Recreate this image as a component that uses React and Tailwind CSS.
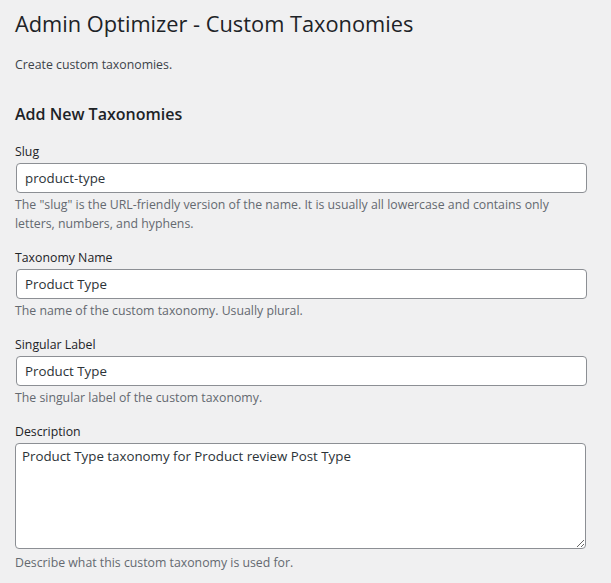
import React from "react";

const fields = [
  {
    label: "Slug",
    value: "product-type",
    help: "The \"slug\" is the URL-friendly version of the name. It is usually all lowercase and contains only letters, numbers, and hyphens.",
  },
  {
    label: "Taxonomy Name",
    value: "Product Type",
    help: "The name of the custom taxonomy. Usually plural.",
  },
  {
    label: "Singular Label",
    value: "Product Type",
    help: "The singular label of the custom taxonomy.",
  },
];

const Field = ({ label, value, help }) => {
  return (
    <div className="mb-[15px]">
      <label className="block text-[12.3px] leading-[19px] text-[#1d2327]">{label}</label>
      <input
        className="mt-[2px] ml-px block w-[571px] h-[30px] rounded-[4px] border border-[#8c8f94] bg-white px-[8px] text-[13.3px] text-[#2c3338] outline-none"
        defaultValue={value}
      />
      <p className="mt-[2px] w-[560px] text-[12.3px] leading-[19px] text-[#646970]">{help}</p>
    </div>
  );
};

const App = () => {
  return (
    <div className="min-h-screen bg-[#f0f0f1] px-[15px] pt-[9px] font-['Open_Sans',sans-serif]">
      <h1 className="text-[21.8px] leading-[29px] text-[#1d2327]">Admin Optimizer - Custom Taxonomies</h1>
      <p className="mt-[17px] text-[12.3px] leading-[19px] text-[#3c434a]">Create custom taxonomies.</p>
      <h2 className="mt-[29px] text-[16px] leading-[23px] font-semibold text-[#1d2327]">Add New Taxonomies</h2>
      <div className="mt-[16px]">
        {fields.map((f) => (
          <Field key={f.label} {...f} />
        ))}
        <div>
          <label className="block text-[12.3px] leading-[19px] text-[#1d2327]">Description</label>
          <textarea
            className="mt-[2px] block w-[571px] h-[106px] rounded-[4px] border border-[#8c8f94] bg-white px-[6px] pt-[2px] text-[13.3px] leading-[20px] text-[#2c3338] outline-none"
            defaultValue="Product Type taxonomy for Product review Post Type"
          />
          <p className="mt-[4px] text-[12.3px] leading-[19px] text-[#646970]">Describe what this custom taxonomy is used for.</p>
        </div>
      </div>
    </div>
  );
};

export default App;
